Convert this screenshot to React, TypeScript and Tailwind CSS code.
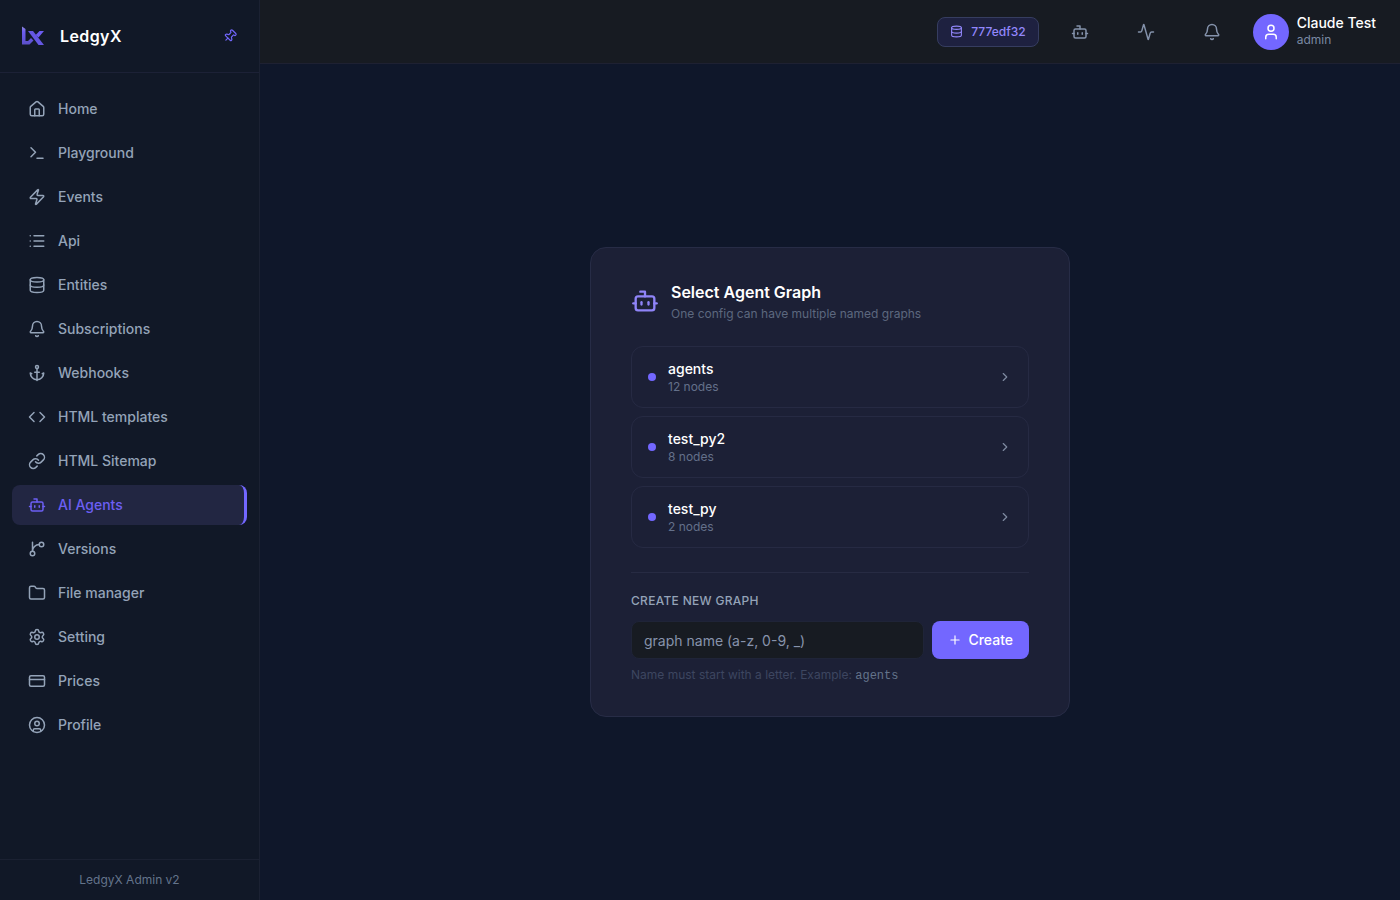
import React from 'react';
import {
  Activity, Anchor, Bell, Bot, ChevronRight, CircleUser, Code, CreditCard, Database, Folder,
  House, Link, List, Pin, Plus, Settings, Terminal, User, Zap,
} from 'lucide-react';

type IconProps = { size?: number };

function BranchIcon({ size = 24 }: IconProps) {
  return (
    <svg
      width={size}
      height={size}
      viewBox="0 0 24 24"
      fill="none"
      stroke="currentColor"
      strokeWidth="2"
      strokeLinecap="round"
      strokeLinejoin="round"
      aria-hidden="true"
    >
      <path d="M15 6a9 9 0 0 0-9 9V3" />
      <circle cx="18" cy="6" r="3" />
      <circle cx="6" cy="18" r="3" />
    </svg>
  );
}

const navItems: { label: string; icon: React.ComponentType<IconProps>; active?: boolean }[] = [
  { label: 'Home', icon: House },
  { label: 'Playground', icon: Terminal },
  { label: 'Events', icon: Zap },
  { label: 'Api', icon: List },
  { label: 'Entities', icon: Database },
  { label: 'Subscriptions', icon: Bell },
  { label: 'Webhooks', icon: Anchor },
  { label: 'HTML templates', icon: Code },
  { label: 'HTML Sitemap', icon: Link },
  { label: 'AI Agents', icon: Bot, active: true },
  { label: 'Versions', icon: BranchIcon },
  { label: 'File manager', icon: Folder },
  { label: 'Setting', icon: Settings },
  { label: 'Prices', icon: CreditCard },
  { label: 'Profile', icon: CircleUser },
];

const graphs = [
  { name: 'agents', nodes: 12 },
  { name: 'test_py2', nodes: 8 },
  { name: 'test_py', nodes: 2 },
];

function Logo() {
  return (
    <svg viewBox="0 0 24 20" className="h-5 w-6" aria-hidden="true">
      <defs>
        <linearGradient id="logo-fill" x1="0" y1="0" x2="0" y2="1">
          <stop offset="0" stopColor="#8f89dc" />
          <stop offset="0.3" stopColor="#6c5cf0" />
          <stop offset="1" stopColor="#5b4fc9" />
        </linearGradient>
      </defs>
      <path d="M1 0.500l3.500 2.500v12h2.500l3-3 2.500 2.500L8.500 18.500H1z" fill="url(#logo-fill)" />
      <path d="M7 5h5l11 14h-5.500z" fill="#6557e2" />
      <path d="M18.500 5H23l-5.500 6.500-2.800-2.500z" fill="#6c5cf0" />
    </svg>
  );
}

function Sidebar() {
  return (
    <aside className="flex w-[260px] shrink-0 flex-col border-r border-[#1b2132] bg-[#111827]">
      <div className="flex h-[73px] items-center border-b border-[#1c2136] pr-5 pl-[21px]">
        <Logo />
        <span className="ml-[15px] text-base font-semibold tracking-wide text-white">LedgyX</span>
        <button type="button" aria-label="Pin sidebar" className="ml-auto p-0.5 text-[#7166fb]">
          <Pin size={14} className="rotate-45" />
        </button>
      </div>
      <nav className="flex flex-1 flex-col gap-1 px-3 py-4">
        {navItems.map(({ label, icon: Icon, active }) => (
          <a
            key={label}
            href="#"
            aria-current={active ? 'page' : undefined}
            className={
              active
                ? 'flex h-10 items-center gap-3 rounded-lg border-r-3 border-[#7367ff] bg-[#222642] px-4 text-sm font-medium text-[#6c5ff3]'
                : 'flex h-10 items-center gap-3 rounded-lg px-4 text-sm font-medium text-[#94a3b8]'
            }
          >
            <Icon size={18} />
            {label}
          </a>
        ))}
      </nav>
      <footer className="flex h-[41px] items-center justify-center border-t border-[#1b2132] text-xs text-[#64748b]">
        LedgyX Admin v2
      </footer>
    </aside>
  );
}

function TopBar() {
  return (
    <header className="flex h-16 items-center justify-end border-b border-[#1e2132] bg-[#171b22] pr-6">
      <button
        type="button"
        className="flex h-[30px] items-center gap-2 rounded-lg border border-[#363d60] bg-[#1e2140] px-3 text-xs font-medium text-[#9287fb]"
      >
        <Database size={13} />
        777edf32
      </button>
      <div className="mr-8 ml-8 flex gap-12 text-[#8492ab]">
        <button type="button" aria-label="Agents"><Bot size={18} /></button>
        <button type="button" aria-label="Activity"><Activity size={18} /></button>
        <button type="button" aria-label="Notifications"><Bell size={18} /></button>
      </div>
      <button type="button" className="flex items-center gap-2 text-left">
        <span className="flex size-9 items-center justify-center rounded-full bg-[#7367ff] text-white">
          <User size={18} />
        </span>
        <span className="pb-0.5">
          <span className="block text-sm leading-[18px] font-medium text-white">Claude Test</span>
          <span className="block text-xs leading-4 text-[#7a89a3]">admin</span>
        </span>
      </button>
    </header>
  );
}

function GraphPicker() {
  return (
    <section className="w-full max-w-[480px] rounded-2xl border border-[#272c46] bg-[#1c2036] px-10 py-8">
      <div className="flex items-center gap-3">
        <Bot size={28} className="text-[#8f84f8]" />
        <div>
          <h1 className="text-base leading-6 font-semibold text-white">Select Agent Graph</h1>
          <p className="mt-0.5 text-xs leading-4 text-[#5d687f]">One config can have multiple named graphs</p>
        </div>
      </div>
      <div className="mt-6 flex flex-col gap-2">
        {graphs.map((graph) => (
          <button
            key={graph.name}
            type="button"
            className="flex h-[62px] items-center gap-3 rounded-xl border border-[#262a43] px-4 text-left"
          >
            <span className="size-2 rounded-full bg-[#7367ff]" />
            <span className="flex-1">
              <span className="block text-sm leading-5 font-medium text-white">{graph.name}</span>
              <span className="block text-xs leading-4 text-[#64708a]">{graph.nodes} nodes</span>
            </span>
            <ChevronRight size={14} className="text-[#7f8aa1]" />
          </button>
        ))}
      </div>
      <form className="mt-6 border-t border-[#272b43] pt-5" onSubmit={(event) => event.preventDefault()}>
        <label htmlFor="graph-name" className="block text-xs leading-4 font-medium tracking-wide text-[#94a3b8] uppercase">
          Create new graph
        </label>
        <div className="mt-3 flex gap-2">
          <input
            id="graph-name"
            type="text"
            placeholder="graph name (a-z, 0-9, _)"
            className="h-[38px] min-w-0 flex-1 rounded-lg border border-[#1f2438] bg-[#171b22] px-3 text-sm text-white outline-none placeholder:text-[#8793ac]"
          />
          <button type="submit" className="flex items-center gap-1.5 rounded-lg bg-[#7367ff] px-4 text-sm font-medium text-white">
            <Plus size={14} />
            Create
          </button>
        </div>
        <p className="mt-2 text-xs leading-4 text-[#3d4660]">
          Name must start with a letter. Example:{' '}
          <code className="font-['Liberation_Mono',monospace] text-[#64748b]">agents</code>
        </p>
      </form>
    </section>
  );
}

export default function App() {
  return (
    <div className="flex min-h-screen bg-[#0f172a] font-['Inter',sans-serif]">
      <Sidebar />
      <div className="flex min-w-0 flex-1 flex-col">
        <TopBar />
        <main className="flex flex-1 items-center justify-center">
          <GraphPicker />
        </main>
      </div>
    </div>
  );
}
